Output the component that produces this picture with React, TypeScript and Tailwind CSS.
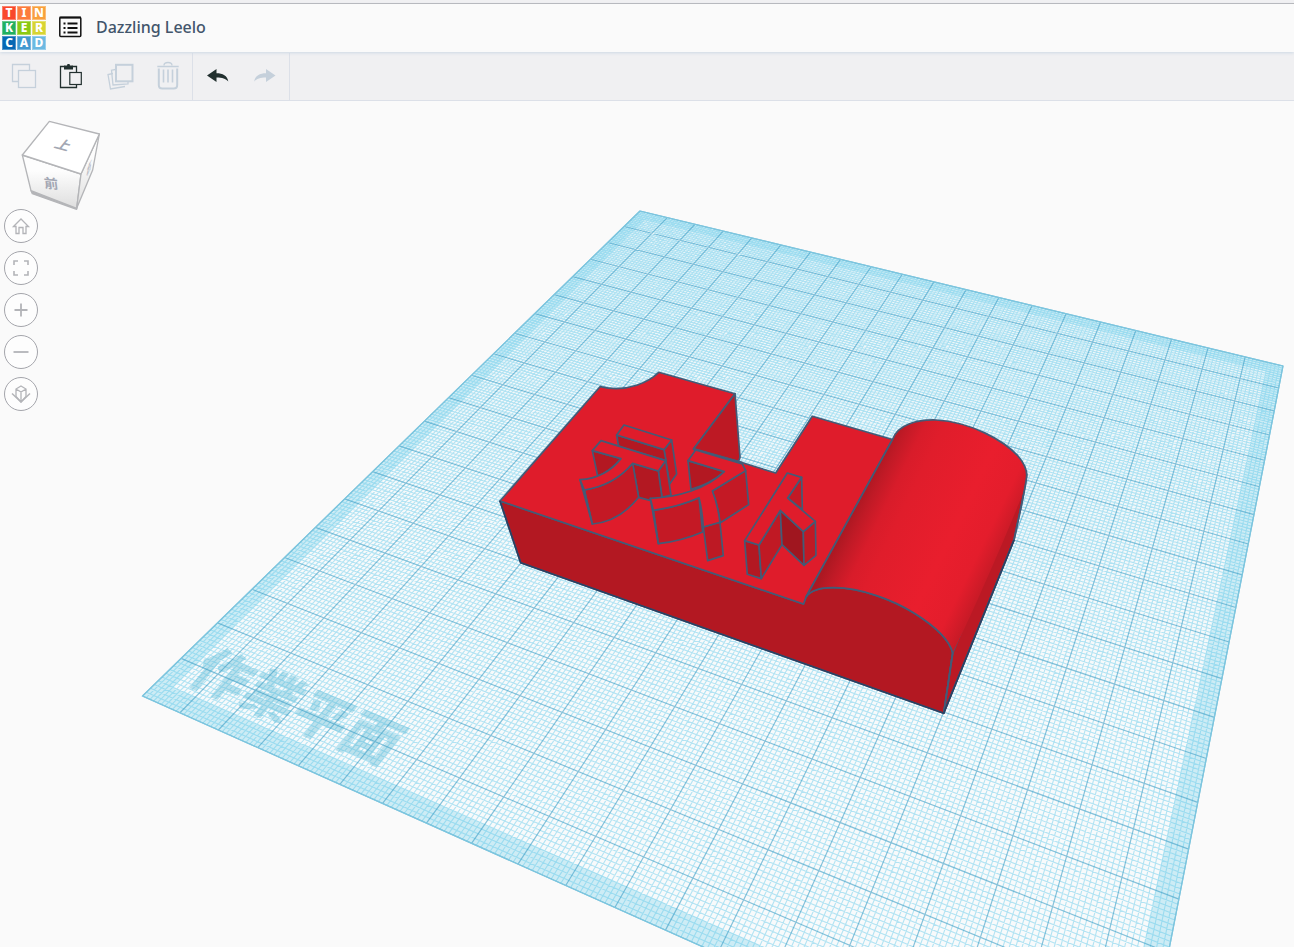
import type { ReactNode } from "react";

const logoTiles = [
  { letter: "T", color: "bg-[#f9482c]" },
  { letter: "I", color: "bg-[#fc7c3c]" },
  { letter: "N", color: "bg-[#f9a03c]" },
  { letter: "K", color: "bg-[#22b060]" },
  { letter: "E", color: "bg-[#8cc914]" },
  { letter: "R", color: "bg-[#d8d432]" },
  { letter: "C", color: "bg-[#0668b4]" },
  { letter: "A", color: "bg-[#4299d0]" },
  { letter: "D", color: "bg-[#6cb9e2]" },
];

// workplane corners on the canvas: back left, back right, front right, front left
const P0 = [640, 211];
const P1 = [1283, 366];
const P2 = [1132, 1139];
const P3 = [142.5, 696];

const sx = P0[0] - P1[0] + P2[0] - P3[0];
const sy = P0[1] - P1[1] + P2[1] - P3[1];
const dx1 = P1[0] - P2[0];
const dx2 = P3[0] - P2[0];
const dy1 = P1[1] - P2[1];
const dy2 = P3[1] - P2[1];
const den = dx1 * dy2 - dx2 * dy1;
const g = (sx * dy2 - dx2 * sy) / den;
const h = (dx1 * sy - sx * dy1) / den;

// u and v run over the plane in millimetres, 0 to 200
function project(u: number, v: number) {
  const s = u / 200;
  const t = v / 200;
  const w = g * s + h * t + 1;
  const x = ((P1[0] - P0[0] + g * P1[0]) * s + (P3[0] - P0[0] + h * P3[0]) * t + P0[0]) / w;
  const y = ((P1[1] - P0[1] + g * P1[1]) * s + (P3[1] - P0[1] + h * P3[1]) * t + P0[1]) / w;
  return `${x.toFixed(2)} ${y.toFixed(2)}`;
}

function gridPath(step: number, skip?: number) {
  let d = "";
  for (let i = 0; i <= 200; i += step) {
    if (skip && i % skip === 0) continue;
    d += `M${project(i, 0)}L${project(i, 200)}M${project(0, i)}L${project(200, i)}`;
  }
  return d;
}

function rectPath(a: number, b: number) {
  return `M${project(a, a)}L${project(b, a)}L${project(b, b)}L${project(a, b)}Z`;
}

function Workplane() {
  return (
    <g fill="none">
      <path d={rectPath(0, 200)} fill="#f8fafb" />
      <path d={rectPath(0, 200)} fill="url(#distance)" />
      <path d={rectPath(0, 200) + rectPath(4, 196)} fill="#cdecf5" fillRule="evenodd" />
      <path d={gridPath(1, 10)} stroke="#5fc8e9" strokeOpacity="0.46" strokeWidth="1.100" />
      <text
        transform="matrix(.495 .21 -.35 .445 186 681)"
        fontSize="100"
        fontWeight="900"
        fontFamily="'Noto Sans CJK TC', sans-serif"
        fill="#4fb4d3"
        fillOpacity="0.36"
      >
        作業平面
      </text>
      <path d={gridPath(10)} stroke="#3a9cc4" strokeOpacity="0.6" strokeWidth="1.200" />
      <path d={rectPath(0, 200)} stroke="#7cc6df" strokeWidth="1.200" />
    </g>
  );
}

function Model() {
  return (
    <g stroke="#435b77" strokeWidth="1.700" strokeLinejoin="round">
      {/* front */}
      <path
        d="M500 501L803.5 604L806 597C811 590 822 587.500 834 587.700C862 588 893 600 914 613C938 628 950 642 952.700 653L943.700 713.300L520.700 562.700Z"
        fill="#b31822"
      />
      {/* top */}
      <path
        d="M500 501L600 386.700C610 389 624 389.500 636.700 385.300C646 382 652 379 658.700 372.300L735 393.700L693.500 449L738.500 461.500L775.700 473L812.300 416.300L892.500 439.500L806 597L803.500 604Z"
        fill="#df1c2b"
      />
      {/* notch wall */}
      <path d="M693.500 449L735 393.700L740 457.500L738.500 461.500Z" fill="#bd1924" />
      <path d="M694 449.500L743 463.500" strokeWidth="3" />
      {/* right side */}
      <path d="M952.700 653L1026.700 474C1026 487 1018 520 1014 540L943.700 713.300Z" fill="#bb1924" />
      {/* rounded block */}
      <path
        d="M892.500 439.500C898 424 918 419.500 936 420C972 422 1004 441 1018 456C1024 463 1027 469 1026.700 476L1024 490C1018 508 970 620 952.700 653C950 642 938 628 914 613C893 600 862 588 834 587.700C822 587.500 811 590 806 597Z"
        fill="url(#roll)"
        stroke="none"
      />
      <path
        d="M806 597L892.500 439.500C898 424 918 419.500 936 420C972 422 1004 441 1018 456C1024 463 1027 469 1026.700 476C1025 492 1018 520 1014 540L943.700 713.300"
        fill="none"
      />
      <path
        d="M806 597C811 590 822 587.500 834 587.700C862 588 893 600 914 613C938 628 950 642 952.700 653L943.700 713.300"
        fill="none"
      />
      <path d="M500 501L520.700 562.700L943.700 713.300L1014 540" fill="none" stroke="#2b4163" />

      {/* first character */}
      <g transform="translate(570 415) scale(.3333)" strokeWidth="5">
        <path d="M282 104L305 75L320 177L299 207Z" fill="#c41925" />
        <path d="M140 60L282 104L288 137L146 95Z" fill="#b31822" />
        <path d="M140 60L162 30L305 75L282 104Z" fill="#df1c2b" />
        <path d="M265 168L287 137L303 240L276 247Z" fill="#c41925" />
        <path d="M188 145L265 168L276 247L240 256L206 247Z" fill="#b31822" />
        <path d="M67 107L153 131C135 152 112 174 83 183Z" fill="#b31822" />
        <path d="M43 225C105 216 150 190 188 145L206 247C170 292 125 322 67 327Z" fill="#c41925" />
        <path d="M30 194L43 225L67 327Z" fill="#a81722" />
        <path
          d="M67 107L93 77L287 137L265 168L188 145C150 190 105 216 43 225L30 194C80 191 122 170 153 131Z"
          fill="#df1c2b"
        />
      </g>

      {/* second character */}
      <g transform="translate(490 360) scale(.3333)" strokeWidth="5">
        <path d="M594 302L703 335C672 362 640 378 603 388Z" fill="#b31822" />
        <path d="M667 393L767 332L776 434L690 489C686 455 678 420 667 393Z" fill="#c41925" />
        <path d="M490 451C537 444 584 432 627 413L638 516C596 534 552 546 505 551Z" fill="#c41925" />
        <path d="M481 415L490 451L505 551Z" fill="#a81722" />
        <path d="M640 501L690 487L700 587L653 602Z" fill="#bd1924" />
        <path
          d="M594 302L617 270L757 312L767 332L667 393C678 420 686 455 690 487L640 501C638 470 634 440 627 413C584 432 537 444 490 451L481 415C565 412 650 386 703 335Z"
          fill="#df1c2b"
        />
      </g>

      {/* third character */}
      <g transform="translate(690 440) scale(.3333)" strokeWidth="5">
        <path d="M335 112L337 209L293 174Z" fill="#c41925" />
        <path d="M164 302L207 315L214 416L172 403Z" fill="#b31822" />
        <path d="M207 315L271 211L276 314L214 416Z" fill="#c01924" />
        <path d="M271 211L340 275L342 376L276 314Z" fill="#a0161f" />
        <path d="M340 275L376 244L378 346L342 376Z" fill="#c01924" />
        <path d="M164 302L292 99L335 112L293 174L376 244L340 275L271 211L207 315Z" fill="#df1c2b" />
      </g>
    </g>
  );
}

function ViewCube() {
  return (
    <svg
      viewBox="60 63 246 264"
      className="ml-5 h-[88px] w-[82px] overflow-visible"
      stroke="#b4b5b8"
      strokeWidth="4"
      strokeLinejoin="round"
    >
      <defs>
        <linearGradient id="face" x1="0" y1="0" x2="0" y2="1">
          <stop offset="0.3" stopColor="#fdfdfd" />
          <stop offset="1" stopColor="#dedede" />
        </linearGradient>
      </defs>
      <path d="M93 272L97 281L230 328L230 322Z" fill="#b4b5b8" />
      <path d="M67 165L243 222L230 325L93 272Z" fill="url(#face)" />
      <path d="M243 222L298 102L278 210L230 325Z" fill="url(#face)" />
      <path d="M67 165L148 64L298 102L243 222Z" fill="#fff" />
      <g stroke="none" fontSize="42" fontFamily="'Noto Sans CJK TC', sans-serif" fill="#a3a7b3">
        <text transform="matrix(1 .27 -.62 .8 160 142)" fontWeight="700">
          上
        </text>
        <text transform="matrix(1 .1 .12 .95 134 263)" fontWeight="700">
          前
        </text>
        <text transform="matrix(.36 -.8 -.1 .9 258 234)" fontWeight="500">
          右
        </text>
      </g>
    </svg>
  );
}

function ToolButton({ label, children, active }: { label: string; children: ReactNode; active?: boolean }) {
  return (
    <button
      type="button"
      aria-label={label}
      className={active ? "h-[47px] w-12 text-[#22302f]" : "h-[47px] w-12 text-[#c5d0db]"}
    >
      <svg viewBox="0 0 48 47" className="h-full w-full" fill="none" stroke="currentColor">
        {children}
      </svg>
    </button>
  );
}

function ViewButton({ label, children }: { label: string; children: ReactNode }) {
  return (
    <button
      type="button"
      aria-label={label}
      className="h-[34px] w-[34px] rounded-full border border-[#a4a5ab] bg-[#fdfdfd] text-[#b3b4b8]"
    >
      <svg viewBox="0 0 32 32" className="h-8 w-8" fill="none" stroke="currentColor" strokeWidth="1.300">
        {children}
      </svg>
    </button>
  );
}

export default function App() {
  return (
    <div className="flex min-h-screen flex-col bg-[#fafafa] font-['Noto_Sans',sans-serif]">
      <div className="h-1 border-b border-[#b3b3b6] bg-[#f0f0f2]" />
      <header className="relative z-10 flex h-12 items-center bg-[#fafafa] shadow-[0_1px_3px_#cdd8e4]">
        <a href="#" aria-label="Tinkercad" className="ml-0.5 grid grid-cols-3 gap-px">
          {logoTiles.map((tile) => (
            <span
              key={tile.letter}
              className={`flex h-3.5 w-3.5 items-center justify-center border border-white/30 text-[12px] leading-3 font-extrabold text-white ${tile.color}`}
            >
              {tile.letter}
            </span>
          ))}
        </a>
        <button type="button" aria-label="Designs" className="ml-3 h-6 w-6">
          <svg viewBox="0 0 24 24" fill="none" stroke="#111" className="h-6 w-6">
            <rect x="1.800" y="1.500" width="21" height="19" rx="1" strokeWidth="1.500" />
            <path d="M1.500 1.500h21.500" strokeWidth="2" />
            <path d="M9.500 7.500h10M9.500 12h10M9.500 16.500h10" strokeWidth="2" />
            <path d="M5.500 7.500h2M5.500 12h2M5.500 16.500h2" strokeWidth="2" />
          </svg>
        </button>
        <h1 className="ml-3.5 pb-0.5 text-base font-medium text-[#42556b]">Dazzling Leelo</h1>
      </header>

      <div className="flex h-[49px] border-b border-[#dce0e8] bg-[#f0f0f2] pt-px">
        <div className="flex border-r border-[#dce0e8]">
          <ToolButton label="Copy">
            <path d="M18.500 28.500h-6v-17h17v6" strokeWidth="1.300" />
            <rect x="18.500" y="17.500" width="17" height="17" strokeWidth="1.300" />
          </ToolButton>
          <ToolButton label="Paste" active>
            <path d="M16.500 13.500h-4v21h16v-3M28.500 19v-5.500h-4" strokeWidth="1.300" />
            <path d="M16 12.500h3l.5-1.500h2l.5 1.500h3v4h-9z" fill="currentColor" stroke="none" />
            <rect x="21.800" y="19.500" width="11.500" height="12" strokeWidth="1.200" />
          </ToolButton>
          <ToolButton label="Duplicate">
            <path d="M17 20.500l-5 1L14.500 36l14.500-2.500" strokeWidth="1.300" />
            <path d="M19.500 16.500l-4 .7L17 32l15-1v-2.500" strokeWidth="1.300" />
            <rect x="20" y="11.800" width="16.500" height="16.500" strokeWidth="2" />
          </ToolButton>
          <ToolButton label="Delete">
            <path d="M13.300 13.500h21.400" strokeWidth="1.500" />
            <path d="M20 12.500c0-4 8-4 8 0" strokeWidth="1.300" />
            <path d="M14.800 15.500V32q0 3.500 3.500 3.500h11.400q3.500 0 3.500-3.500V15.500" strokeWidth="2" />
            <path d="M19.500 16.500v13M24 16.500v13M28.500 16.500v13" strokeWidth="1.600" />
          </ToolButton>
        </div>
        <div className="flex border-r border-[#dce0e8]">
          <ToolButton label="Undo" active>
            <path
              d="M14 22.500l9.500-6.500v4.200c6 0 11 2.300 11.800 8.300-2.500-2.800-6-4-11.800-4V29z"
              fill="currentColor"
              stroke="none"
            />
          </ToolButton>
          <ToolButton label="Redo">
            <path
              d="M34.500 22.500L25 16v4.200c-6 0-11 2.300-11.800 8.300 2.500-2.800 6-4 11.800-4V29z"
              fill="currentColor"
              stroke="none"
            />
          </ToolButton>
        </div>
      </div>

      <main className="relative flex-1 overflow-hidden">
        <svg
          viewBox="0 101 1294 846"
          preserveAspectRatio="xMinYMin slice"
          className="absolute inset-0 h-full w-full"
        >
          <defs>
            <linearGradient id="distance" gradientUnits="userSpaceOnUse" x1="800" y1="230" x2="700" y2="600">
              <stop offset="0" stopColor="#7fd0ea" stopOpacity="0.12" />
              <stop offset="1" stopColor="#7fd0ea" stopOpacity="0" />
            </linearGradient>
            <linearGradient id="roll" gradientUnits="userSpaceOnUse" x1="850" y1="517" x2="994" y2="587">
              <stop offset="0" stopColor="#ad1822" />
              <stop offset="0.07" stopColor="#c01a26" />
              <stop offset="0.17" stopColor="#d81c2a" />
              <stop offset="0.28" stopColor="#e01d2b" />
              <stop offset="0.62" stopColor="#e91e2d" />
              <stop offset="0.82" stopColor="#e41d2c" />
              <stop offset="1" stopColor="#bb1924" />
            </linearGradient>
          </defs>
          <Workplane />
          <Model />
        </svg>

        <div className="relative flex w-28 flex-col pt-5">
          <ViewCube />
          <div className="ml-1 flex flex-col gap-2">
            <ViewButton label="Home view">
              <path d="M8.500 16.500L16 9l7.500 7.500h-2.500v7h-3v-6h-4v6h-3v-7z" />
            </ViewButton>
            <ViewButton label="Fit all">
              <path d="M9 13V9h4M19 9h4v4M23 19v4h-4M13 23H9v-4" strokeWidth="1.600" />
            </ViewButton>
            <ViewButton label="Zoom in">
              <path d="M16 9.500v13M9.500 16h13" strokeWidth="1.800" />
            </ViewButton>
            <ViewButton label="Zoom out">
              <path d="M8.500 16h15" strokeWidth="1.800" />
            </ViewButton>
            <ViewButton label="Switch to orthographic view">
              <path d="M16 8l5 3v7.500L16 24l-5-5.500V11zM11 11l5 3 5-3M16 14v10" />
              <path d="M7 15.500l9 8.500 9-8.500" strokeWidth="1.500" />
            </ViewButton>
          </div>
        </div>
      </main>
    </div>
  );
}
